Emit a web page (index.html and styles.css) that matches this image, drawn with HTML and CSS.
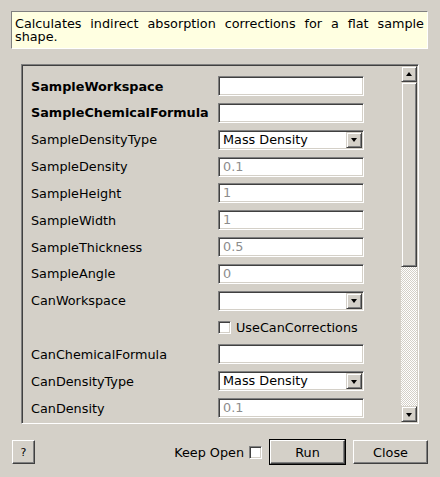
FILE: index.html
```html
<!DOCTYPE html>
<html>
<head>
<meta charset="utf-8">
<link rel="stylesheet" href="styles.css">
</head>
<body>
<div class="dialog">
  <div class="desc">Calculates indirect absorption corrections for a flat sample shape.</div>
  <div class="frame">
    <div class="panel">
      <div class="rows">
        <div class="row"><span class="lbl bold">SampleWorkspace</span><span class="field"></span></div>
        <div class="row"><span class="lbl bold">SampleChemicalFormula</span><span class="field"></span></div>
        <div class="row"><span class="lbl">SampleDensityType</span><span class="combo"><span class="ctext">Mass Density</span><span class="dbtn"><span class="arrow-down"></span></span></span></div>
        <div class="row"><span class="lbl">SampleDensity</span><span class="field ph">0.1</span></div>
        <div class="row"><span class="lbl">SampleHeight</span><span class="field ph">1</span></div>
        <div class="row"><span class="lbl">SampleWidth</span><span class="field ph">1</span></div>
        <div class="row"><span class="lbl">SampleThickness</span><span class="field ph">0.5</span></div>
        <div class="row"><span class="lbl">SampleAngle</span><span class="field ph">0</span></div>
        <div class="row"><span class="lbl">CanWorkspace</span><span class="combo"><span class="ctext"></span><span class="dbtn"><span class="arrow-down"></span></span></span></div>
        <div class="row"><span class="lbl"></span><span class="chkline"><span class="chk"></span><span>UseCanCorrections</span></span></div>
        <div class="row"><span class="lbl">CanChemicalFormula</span><span class="field"></span></div>
        <div class="row"><span class="lbl">CanDensityType</span><span class="combo"><span class="ctext">Mass Density</span><span class="dbtn"><span class="arrow-down"></span></span></span></div>
        <div class="row"><span class="lbl">CanDensity</span><span class="field ph">0.1</span></div>
      </div>
    </div>
    <div class="sbar">
      <span class="sbtn"><span class="arrow-up"></span></span>
      <span class="thumb"></span>
      <span class="trough"></span>
      <span class="sbtn"><span class="arrow-down"></span></span>
    </div>
  </div>
  <div class="footer">
    <span class="btn help">?</span>
    <span class="spacer"></span>
    <span class="keep">Keep Open</span>
    <span class="chk keepchk"></span>
    <span class="default"><span class="btn run">Run</span></span>
    <span class="btn close">Close</span>
  </div>
</div>
</body>
</html>
```
FILE: styles.css
```css
html, body {
  margin: 0;
  padding: 0;
  background: #d4d0c8;
}
body {
  width: 440px;
  height: 477px;
  overflow: hidden;
  font-family: "DejaVu Sans", "Liberation Sans", sans-serif;
  font-size: 12.8px;
  color: #000;
}
.dialog {
  padding: 11px 12px 0 11px;
  display: flex;
  flex-direction: column;
}
.desc {
  box-sizing: border-box;
  width: 417px;
  height: 38px;
  background: #ffffe1;
  border: 1px solid;
  border-color: #808080 #ffffff #ffffff #808080;
  padding: 5px 3px 0 3px;
  line-height: 13px;
  text-align: justify;
}
.frame {
  box-sizing: border-box;
  margin: 15px 0 0 10px;
  width: 398px;
  height: 360px;
  border: 1px solid;
  border-color: #808080 #ffffff #ffffff #808080;
  box-shadow: inset 1px 1px #404040, inset -1px -1px #d4d0c8;
  padding: 1px;
  display: flex;
}
.panel {
  flex: 1;
  overflow: hidden;
  padding: 10px 0 0 8px;
}
.rows {
  display: flex;
  flex-direction: column;
  gap: 6.85px;
}
.row {
  display: grid;
  grid-template-columns: 187px 146px;
  align-items: center;
  height: 20px;
}
.lbl { white-space: nowrap; }
.bold { font-weight: bold; }
.field, .combo {
  box-sizing: border-box;
  height: 20px;
  background: #fff;
  border: 1px solid;
  border-color: #808080 #ffffff #ffffff #808080;
  box-shadow: inset 1px 1px #404040, inset -1px -1px #d4d0c8;
  padding: 0 4px;
  display: flex;
  align-items: center;
  line-height: 18px;
}
.ph { color: #8c8c8c; }
.combo {
  padding: 1px 1px 1px 4px;
  justify-content: space-between;
}
.ctext { white-space: nowrap; }
.dbtn, .sbtn {
  box-sizing: border-box;
  width: 16px;
  height: 16px;
  background: #d4d0c8;
  border: 1px solid;
  border-color: #d4d0c8 #404040 #404040 #d4d0c8;
  box-shadow: inset 1px 1px #ffffff, inset -1px -1px #808080;
  display: flex;
  align-items: center;
  justify-content: center;
  flex: none;
}
.arrow-down {
  width: 0;
  height: 0;
  border-left: 3.5px solid transparent;
  border-right: 3.5px solid transparent;
  border-top: 4px solid #000;
  margin-top: 1px;
}
.arrow-up {
  width: 0;
  height: 0;
  border-left: 3.5px solid transparent;
  border-right: 3.5px solid transparent;
  border-bottom: 4px solid #000;
  margin-bottom: 1px;
}
.chkline {
  display: flex;
  align-items: center;
  gap: 5px;
  white-space: nowrap;
}
.chk {
  box-sizing: border-box;
  width: 13px;
  height: 13px;
  background: #fff;
  border: 1px solid;
  border-color: #808080 #ffffff #ffffff #808080;
  box-shadow: inset 1px 1px #404040, inset -1px -1px #d4d0c8;
  flex: none;
}
.sbar {
  width: 16px;
  display: flex;
  flex-direction: column;
}
.thumb {
  box-sizing: border-box;
  height: 185px;
  background: #d4d0c8;
  border: 1px solid;
  border-color: #d4d0c8 #404040 #404040 #d4d0c8;
  box-shadow: inset 1px 1px #ffffff, inset -1px -1px #808080;
}
.trough {
  flex: 1;
  background: repeating-conic-gradient(#ffffff 0 25%, #d4d0c8 0 50%) 0 0 / 2px 2px;
}
.footer {
  margin-top: 15px;
  margin-left: 1px;
  display: flex;
  align-items: center;
  height: 26px;
}
.btn {
  box-sizing: border-box;
  height: 24px;
  background: #d4d0c8;
  border: 1px solid;
  border-color: #ffffff #404040 #404040 #ffffff;
  box-shadow: inset -1px -1px #808080;
  display: flex;
  align-items: center;
  justify-content: center;
}
.help {
  width: 23px;
  font-size: 11px;
}
.spacer { flex: 1; }
.keep { margin-right: 5px; white-space: nowrap; }
.keepchk { margin-right: 7px; }
.default {
  box-sizing: border-box;
  width: 77px;
  height: 26px;
  border: 1px solid #000;
}
.run {
  width: 75px;
}
.close {
  width: 75px;
  margin-left: 7px;
}
```
